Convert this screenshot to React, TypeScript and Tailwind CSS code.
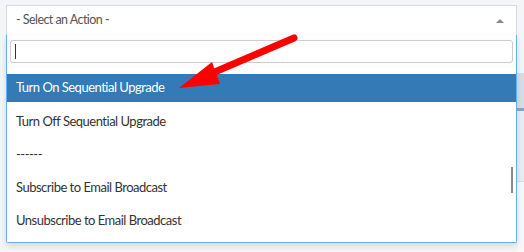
export default function App() {
  const rows = [
    "Turn Off Sequential Upgrade",
    "------",
    "Subscribe to Email Broadcast",
    "Unsubscribe to Email Broadcast",
  ];

  return (
    <div
      className="relative w-[524px] h-[252px] overflow-hidden bg-[#f4f5f7] pt-[5px] pl-[6px] flex flex-col"
      style={{ fontFamily: "Lato, 'Open Sans', sans-serif" }}
    >
      {/* select box */}
      <div className="w-[511px] h-[30px] shrink-0 bg-white border border-b-0 border-[#d2dbe5] flex items-center justify-between pl-[9px] pr-[12px]">
        <span className="text-[12.5px] tracking-[-0.55px] text-[#555]">- Select an Action -</span>
        <span className="w-0 h-0 border-l-[4px] border-r-[4px] border-b-[4px] border-l-transparent border-r-transparent border-b-[#888]" />
      </div>

      <div className="flex flex-1">
        {/* dropdown */}
        <div className="relative w-[511px] h-[208px] shrink-0 bg-white border border-t-0 border-[#66b0f2] rounded-b-[2px] shadow-[0_3px_6px_rgba(0,0,0,0.12)] flex flex-col">
          <div className="px-[3px] pt-[5px] pb-[5px] bg-[#fdfdfd]">
            <div className="h-[23px] bg-white border border-[#cccccc] rounded-[3px] flex items-center pl-[4px]">
              <span className="w-[1px] h-[15px] bg-[#333]" />
            </div>
          </div>
          <div className="flex-1 overflow-hidden pt-[6px] text-[13px] tracking-[-0.5px]">
            <div className="h-[28px] bg-[#337ab7] text-white flex items-center pl-[9px]">
              Turn On Sequential Upgrade
            </div>
            <div className="mt-[3px]">
              {rows.map((r) => (
                <div key={r} className="h-[33px] flex items-center pl-[9px] text-[#333]">
                  {r}
                </div>
              ))}
            </div>
          </div>
          <div className="absolute right-[3px] top-[132px] w-[2px] h-[26px] bg-[#8a8a85]" />
        </div>

        {/* page behind, right edge */}
        <div className="flex-1 flex flex-col">
          <div className="h-[38px] bg-[#f4f5f7]" />
          <div className="h-[35px] bg-[#d5dde7]" />
          <div className="h-[3px] bg-[#8aa5c9]" />
          <div className="h-[71px] bg-[#ececee] border-b border-[#dddddd]" />
          <div className="flex-1 bg-[#f8f8f8]" />
        </div>
      </div>

      {/* red annotation arrow */}
      <svg className="absolute left-0 top-0" width="524" height="252" viewBox="0 0 524 252">
        <line x1="294" y1="38" x2="210" y2="74" stroke="#ff0000" strokeWidth="7" strokeLinecap="round" />
        <polygon points="179,88 212,62 220,84" fill="#ff0000" />
      </svg>
    </div>
  );
}
